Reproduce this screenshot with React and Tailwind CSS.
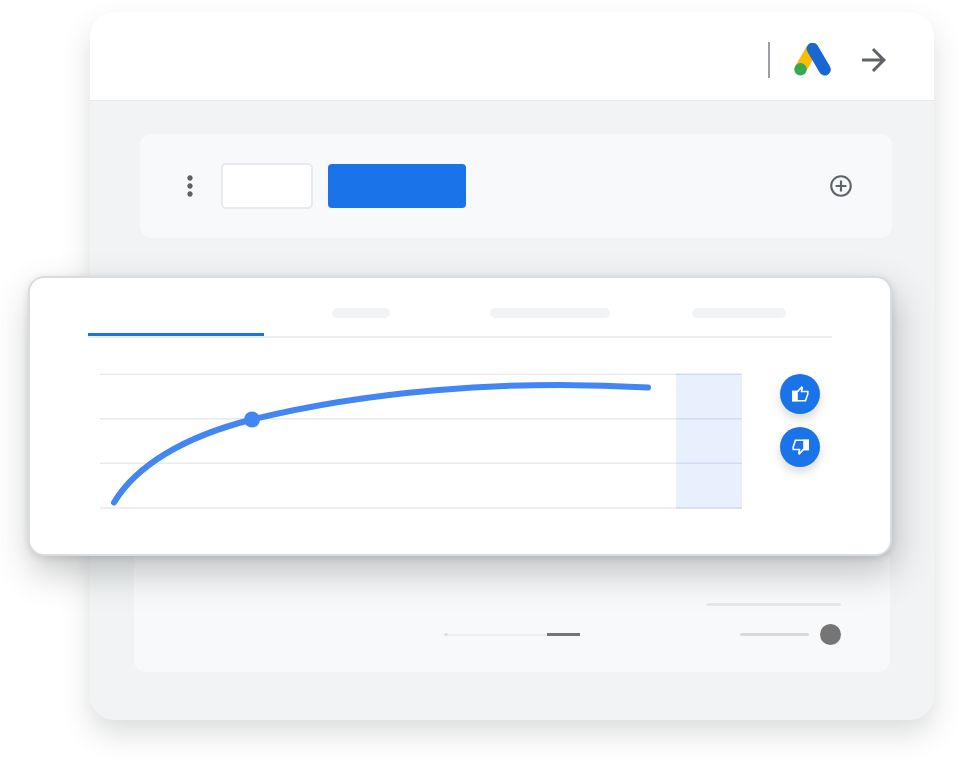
import { MdAddCircleOutline, MdArrowForward, MdMoreVert } from 'react-icons/md';
import clsx from 'clsx';

const tabs = [
  { id: 'overview', label: 'Overview', pill: null },
  { id: 'ads', label: 'Ads', pill: 'w-[58px]' },
  { id: 'recommendations', label: 'Recommendations', pill: 'w-[120px]' },
  { id: 'campaigns', label: 'Campaigns', pill: 'w-[94px]' },
];

const gridLines = [1.4, 45.8, 90.3, 135];

function AdsLogo() {
  return (
    <svg viewBox="0 0 38 34" className="h-[34px] w-[38px]" aria-hidden="true">
      <path d="M6.500 26 18 6" stroke="#fbbc04" strokeWidth="12" />
      <path d="M18.600 5.700 30.800 26.500" stroke="#1967d2" strokeWidth="12" strokeLinecap="round" />
      <circle cx="6.500" cy="26.300" r="6.200" fill="#34a853" />
    </svg>
  );
}

function ThumbIcon({ down }) {
  return (
    <svg viewBox="0 0 17 16" className={clsx('h-4 w-[17px]', down && 'rotate-180')} aria-hidden="true">
      <path d="M0 4.600h5.800V15.600H0z" fill="#fff" />
      <path
        d="M5.300 5.900 9.700 1.200l.6.5-.8 3.800h6.300v2.600l-2.300 6.700H5.300"
        fill="none"
        stroke="#fff"
        strokeWidth="1.6"
      />
    </svg>
  );
}

function FeedbackButton({ label, down }) {
  return (
    <button
      type="button"
      aria-label={label}
      className="flex size-10 items-center justify-center rounded-full bg-[#1a73e8] shadow-[0_5px_10px_rgba(60,70,65,0.2)]"
    >
      <ThumbIcon down={down} />
    </button>
  );
}

function TrendChart() {
  return (
    <svg viewBox="0 0 642 137" className="min-w-0 flex-1" role="img" aria-label="Performance trend">
      {gridLines.map((y) => (
        <path key={y} d={`M0 ${y}H642`} stroke="#e8eaed" strokeWidth="1.400" />
      ))}
      <path d="M576 .500h66v135.500h-66z" fill="#e8f0fe" />
      {gridLines.map((y) => (
        <path key={y} d={`M576 ${y}H642`} stroke="#d0dcf0" strokeWidth="1.400" />
      ))}
      <path
        d="M14 129.500C36 93 83 64 152 46.500C262 19.500 400 6 548 14.500"
        fill="none"
        stroke="#4285f4"
        strokeWidth="6"
        strokeLinecap="round"
      />
      <circle cx="152" cy="46.500" r="8" fill="#4285f4" />
    </svg>
  );
}

function ChartCard() {
  return (
    <section className="relative z-10 mt-[38px] mr-[42px] -ml-[62px] rounded-2xl border-2 border-[#dadce0] bg-white px-[58px] pt-[18px] pb-11 shadow-[0_2px_6px_rgba(60,64,67,0.14),4px_16px_36px_rgba(60,64,67,0.3)]">
      <nav className="flex h-[42px] border-b-2 border-[#edeef0]">
        {tabs.map((tab) => (
          <button
            key={tab.id}
            type="button"
            aria-label={tab.label}
            className={clsx(
              'flex items-center justify-center',
              tab.pill ? 'flex-1 pb-1.5 pl-1' : 'w-44 border-b-3 border-[#1a73e8]'
            )}
          >
            {tab.pill && <span className={clsx('h-2.5 rounded-full bg-[#f1f3f4]', tab.pill)} />}
          </button>
        ))}
      </nav>
      <div className="flex items-start gap-[38px] px-3 pt-[35px]">
        <TrendChart />
        <div className="flex flex-col gap-[13px] pt-px">
          <FeedbackButton label="Helpful" />
          <FeedbackButton label="Not helpful" down />
        </div>
      </div>
    </section>
  );
}

export default function App() {
  return (
    <div className="min-h-screen bg-white pt-3 pr-[25px] pb-10 pl-[90px] font-['Roboto',sans-serif]">
      <div className="rounded-3xl bg-[#f1f3f4] pb-12 shadow-[0_14px_28px_rgba(60,70,65,0.18)]">
        <header className="flex h-[89px] items-center justify-end rounded-t-3xl border-b border-[#e8eaed] bg-white pt-2 pr-[42px]">
          <span className="mr-6 h-9 w-0.5 bg-[#9aa0a6]" />
          <AdsLogo />
          <button type="button" aria-label="Next" className="ml-6 text-[#5f6368]">
            <MdArrowForward size={36} />
          </button>
        </header>

        <section className="mt-[33px] mr-[42px] ml-[50px] flex h-[104px] items-center rounded-xl bg-[#f8f9fb] pr-[38px] pl-[34px] text-[#5f6368]">
          <button type="button" aria-label="More options">
            <MdMoreVert size={32} />
          </button>
          <button
            type="button"
            aria-label="Secondary action"
            className="ml-[15px] h-[46px] w-[92px] rounded-[5px] border-2 border-[#e8eaed] bg-white"
          />
          <button
            type="button"
            aria-label="Primary action"
            className="ml-[15px] h-11 w-[138px] rounded bg-[#1a73e8]"
          />
          <button type="button" aria-label="Add" className="ml-auto">
            <MdAddCircleOutline size={26} />
          </button>
        </section>

        <ChartCard />

        <section className="mx-11 flex flex-col items-end gap-[18px] rounded-b-xl bg-[#f8f9fb] pt-[47px] pr-[49px] pb-[27px]">
          <span className="h-[3px] w-[135px] rounded-full bg-[#e8e8e8]" />
          <div className="flex items-center">
            <span className="h-[3px] w-1 rounded-full bg-[#dedede]" />
            <span className="h-0.5 w-[99px] bg-[#efefef]" />
            <span className="h-[3px] w-[33px] bg-[#757575]" />
            <span className="ml-40 h-[3px] w-[69px] rounded-full bg-[#d9d9d9]" />
            <span className="ml-[11px] size-[21px] rounded-full bg-[#757575]" />
          </div>
        </section>
      </div>
    </div>
  );
}
